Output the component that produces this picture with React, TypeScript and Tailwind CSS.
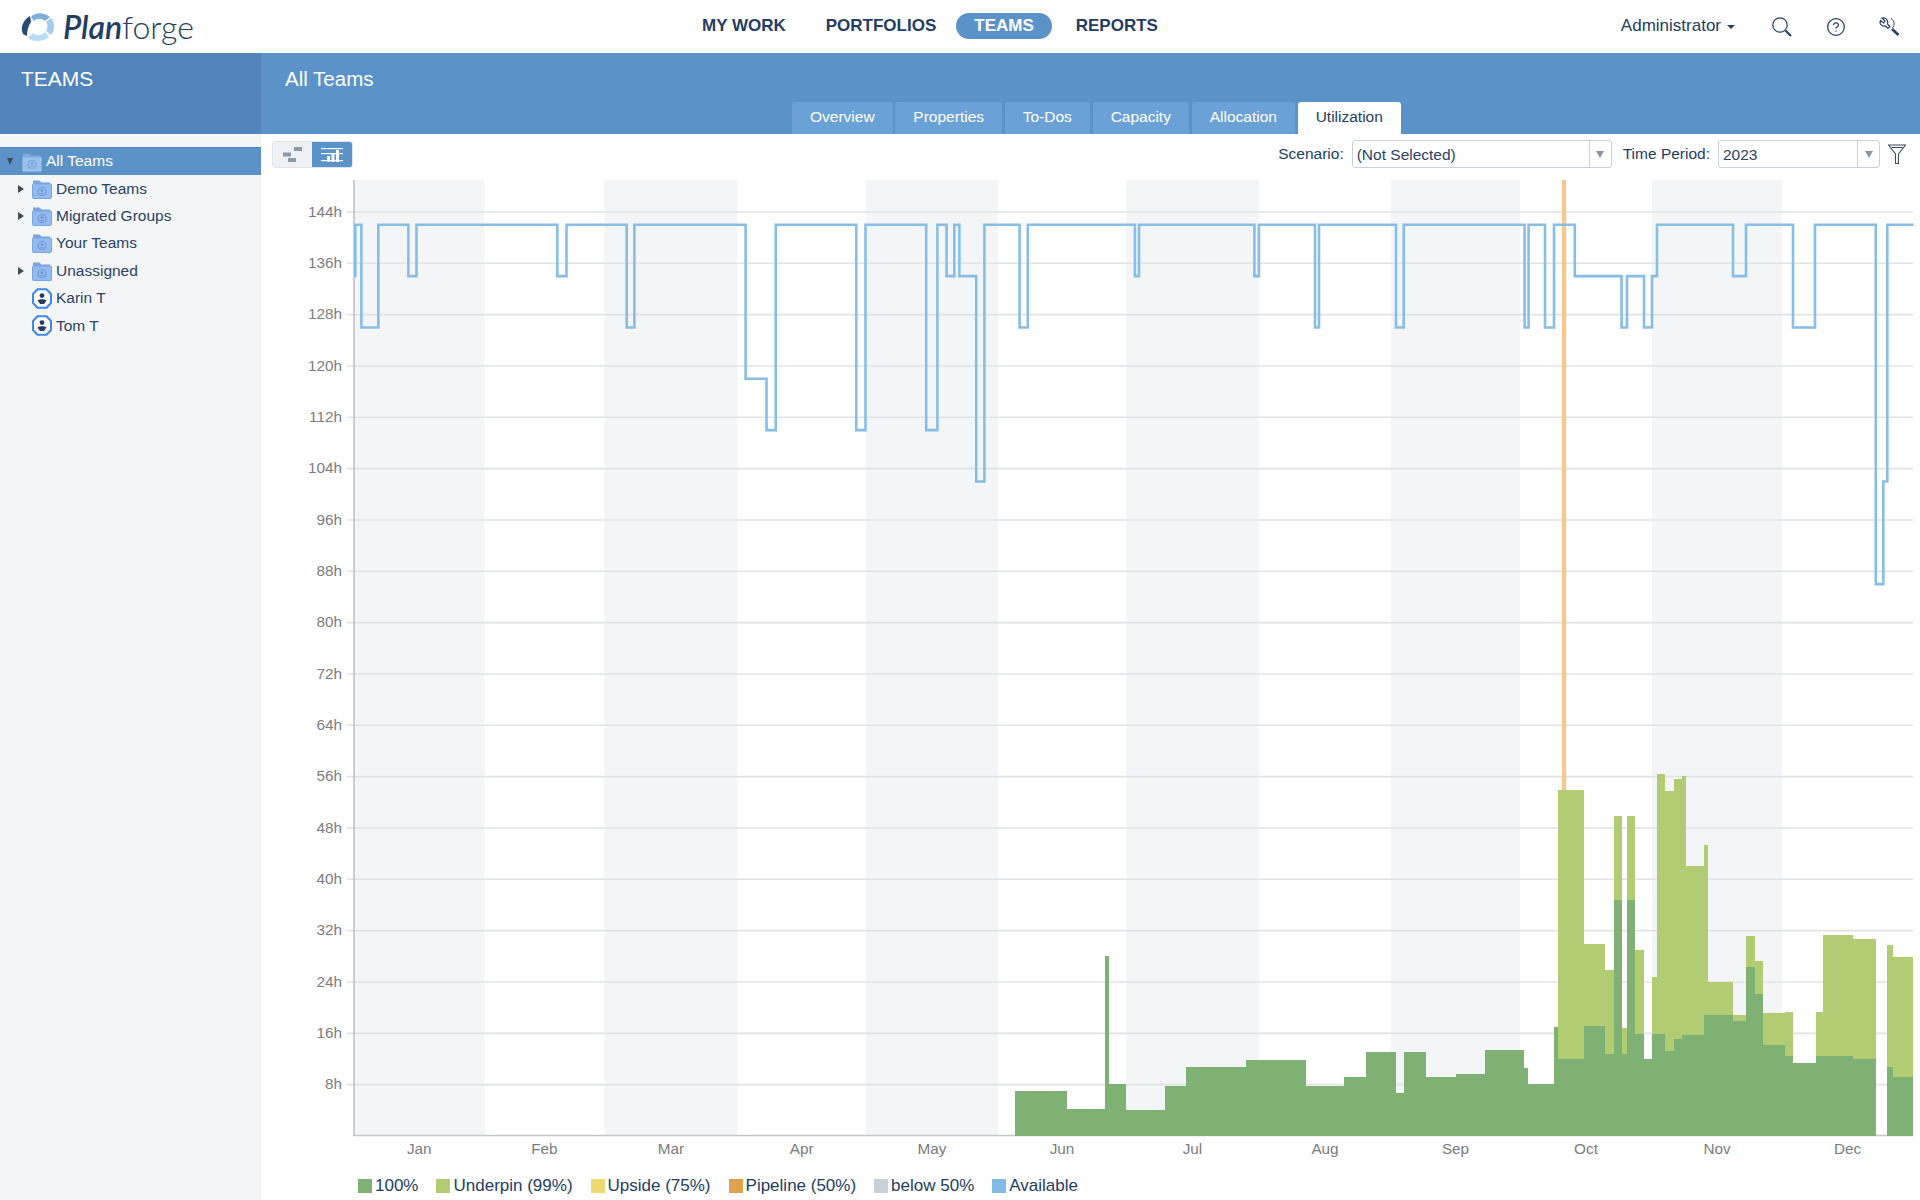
import { CircleHelp } from "lucide-react";

const navy = "#233d63";

// month boundaries on the x axis
const months = ["Jan", "Feb", "Mar", "Apr", "May", "Jun", "Jul", "Aug", "Sep", "Oct", "Nov", "Dec"];
const monthX = [354, 484.5, 604.3, 737.4, 866, 998, 1126, 1259, 1391, 1520, 1652, 1782, 1913];

const hours = Array.from({ length: 18 }, (_, i) => (i + 1) * 8);
const yOf = (h: number) => 1136 - h * 6.417;

// [x where the step starts, hours]
const available: [number, number][] = [
  [354, 134], [355.3, 142], [361.4, 126], [378.3, 142], [408.4, 134], [416.5, 142], [557.3, 134],
  [566.5, 142], [626.7, 126], [634.4, 142], [745.6, 118], [766.5, 110], [775.7, 142], [856.3, 110],
  [865.5, 142], [926.2, 110], [937.4, 142], [946.6, 134], [954.3, 142], [959.4, 134], [976.2, 102],
  [984.4, 142], [1019.6, 126], [1027.8, 142], [1134.9, 134], [1139, 142], [1254.4, 134], [1258.9, 142],
  [1315, 126], [1319, 142], [1396, 126], [1403.7, 142], [1524.6, 126], [1528.6, 142], [1545, 126],
  [1554, 142], [1574.8, 134], [1621.6, 126], [1627, 134], [1644, 126], [1652, 134], [1657, 142],
  [1733, 134], [1746, 142], [1793, 126], [1815, 142], [1875.8, 86], [1883.3, 102], [1887.3, 142],
];

function stepPath() {
  let d = "";
  available.forEach(([x, h], i) => {
    if (i === 0) d += `M${x} ${yOf(h)}`;
    else d += `H${x}V${yOf(h)}`;
  });
  return d + "H1913.5";
}

// [x0, x1, top of 100%, top of underpin] in page pixels
const bars: [number, number, number, number?][] = [
  [1015, 1067, 1091.3], [1067, 1105, 1108.7], [1105, 1109, 956], [1109, 1126, 1084], [1126, 1165, 1110],
  [1165, 1186, 1086], [1186, 1246, 1067], [1246, 1306, 1060], [1306, 1344, 1086], [1344, 1366, 1077],
  [1366, 1396, 1052.3], [1396, 1404, 1093], [1404, 1426, 1052.3], [1426, 1456, 1077], [1456, 1485, 1074.3],
  [1485, 1524, 1050], [1524, 1528, 1068], [1528, 1554, 1084.3], [1554, 1558, 1027.3],
  [1558, 1584, 1059, 790], [1584, 1605, 1026, 944], [1605, 1614, 1054, 970], [1614, 1622, 899.7, 816],
  [1622, 1627.3, 1054, 1028], [1627.3, 1635, 899.7, 816], [1635, 1644, 1034, 950.3], [1644, 1652, 1059],
  [1652, 1657.3, 1034, 976.7], [1657.3, 1665, 1034, 774], [1665, 1674.3, 1051, 791], [1674.3, 1682, 1039.3, 779.3],
  [1682, 1686, 1035.3, 775.7], [1686, 1704.3, 1035.3, 865.7], [1704.3, 1708.3, 1014.7, 845], [1708.3, 1733, 1014.7, 981.7],
  [1733, 1746, 1021, 1014.7], [1746, 1755.3, 967.3, 936], [1755.3, 1763, 993.7, 961], [1763, 1785.3, 1044.7, 1013],
  [1785.3, 1793, 1056, 1012], [1793, 1815.7, 1063], [1815.7, 1823.3, 1056, 1012], [1823.3, 1853.3, 1056, 935],
  [1853.3, 1875.7, 1059, 939], [1887.3, 1892.7, 1067, 945], [1892.7, 1913.3, 1077, 957],
];

const legend = [
  { label: "100%", color: "bg-[#7fb174]" },
  { label: "Underpin (99%)", color: "bg-[#b2cc74]" },
  { label: "Upside (75%)", color: "bg-[#ecd96f]" },
  { label: "Pipeline (50%)", color: "bg-[#dfa350]" },
  { label: "below 50%", color: "bg-[#c8d0d8]" },
  { label: "Available", color: "bg-[#81bbe3]" },
];

const tabs = ["Overview", "Properties", "To-Dos", "Capacity", "Allocation"];

function Logo() {
  return (
    <div className="flex items-center pl-[21px] w-[682px]">
      <svg width="34" height="30" viewBox="0 0 34 30" fill="none" className="mr-[8px]">
        <path d="M10 5 C14 0 23 0 29 5 L24 9 C20 6 16 6 13 9 Z" fill="#7fb0dc" />
        <path d="M30 6 C34 11 34 18 30 23 L25 19 C27 15 27 12 25 10 Z" fill="#a5cdee" />
        <path d="M28 25 C22 30 12 30 7 26 L12 21 C15 24 20 24 24 20 Z" fill="#b9dcf6" />
        <path d="M9 4 L10 10 C7 14 6 19 6 24 L2 22 C-1 16 2 8 9 4 Z" fill="#274a70" />
      </svg>
      <span className="font-['Lato',sans-serif] text-[32px] leading-none text-[#233d63]">
        <span className="italic font-semibold">Plan</span>
        <span className="font-light">forge</span>
      </span>
    </div>
  );
}

function SearchIcon() {
  return (
    <svg width="22" height="20" viewBox="0 0 22 20" fill="none" stroke={navy}>
      <circle cx="9" cy="8" r="7.2" strokeWidth="1.2" />
      <path d="M14.5 13.5 L20 19" strokeWidth="2.2" />
    </svg>
  );
}

function ToolsIcon() {
  return (
    <svg width="21" height="19" viewBox="0 0 21 19" fill="none" stroke={navy}>
      <path d="M3 1 L6 4 L4.5 6 L1.5 3.5 C0 7 3 10 6.5 9 L9 11.5 L11 9.5 L8.5 7 C9.5 3 6.5 0 3 1 Z" strokeWidth="1.2" />
      <path d="M12 1.5 C15.5 3.5 16 8 13.5 11" strokeWidth="1" />
      <path d="M13 12 L19.5 18" strokeWidth="2.6" />
    </svg>
  );
}

function FilterIcon() {
  return (
    <svg width="18" height="20" viewBox="0 0 18 20" fill="none" stroke="#3a4a5e" strokeWidth="1.1">
      <path d="M0.5 1 H17.5 L10.5 10 V19.5 H7.5 V10 Z" />
      <path d="M3.5 3.5 H14.5" />
    </svg>
  );
}

function FolderIcon({ selected }: { selected?: boolean }) {
  return (
    <svg width="20" height="20" viewBox="0 0 20 20">
      <path d="M1 1.5 H7.5 L9.5 3.5 H18 V7 H1 Z" fill={selected ? "#7ea8dc" : "#7ba5dc"} />
      <rect x="0.5" y="5" width="19" height="14.5" rx="1" fill={selected ? "#9cc0ee" : "#93bbef"} stroke={selected ? "#85addf" : "#7aa6de"} />
      <circle cx="10" cy="12.5" r="4" fill="none" stroke={selected ? "#7aa3d8" : "#6f9bd4"} strokeWidth="1.2" />
      <circle cx="10" cy="11.6" r="1.5" fill={selected ? "#7aa3d8" : "#6f9bd4"} />
      <path d="M7.5 15 C8.5 13.5 11.5 13.5 12.5 15" fill={selected ? "#7aa3d8" : "#6f9bd4"} />
    </svg>
  );
}

function PersonIcon() {
  return (
    <svg width="20" height="21" viewBox="0 0 20 21">
      <path d="M5.5 1.2 H14.5 L19 6 V15 L14.5 19.8 H5.5 L1 15 V6 Z" fill="#fff" stroke="#3f86ee" strokeWidth="2" strokeLinejoin="round" />
      <circle cx="10" cy="7.6" r="2.4" fill="#233d63" />
      <path d="M5.5 12.5 C7 10.8 13 10.8 14.5 12.5 L12 16 H8 Z" fill="#233d63" />
    </svg>
  );
}

function TreeRow({
  label,
  icon,
  arrow,
}: {
  label: string;
  icon: React.ReactNode;
  arrow?: boolean;
}) {
  return (
    <div className="flex items-center h-[27.4px] pl-[18px] text-[15.5px] text-[#2b4263]">
      <span className="w-[14px] flex">
        {arrow && <span className="border-y-[4px] border-y-transparent border-l-[6px] border-l-[#444b55]" />}
      </span>
      {icon}
      <span className="ml-[4px] -mt-px">{label}</span>
    </div>
  );
}

function Select({ value, widthClass }: { value: string; widthClass: string }) {
  return (
    <div className={`flex h-[28px] bg-white border border-[#c6d1dd] rounded-[3px] ${widthClass}`}>
      <span className="flex-1 pl-[4px] text-[15.5px] leading-[27px] text-[#2b4263]">{value}</span>
      <span className="w-[22px] border-l border-[#c6d1dd] flex items-center justify-center">
        <span className="border-x-[4.5px] border-x-transparent border-t-[7px] border-t-[#8a96a3]" />
      </span>
    </div>
  );
}

function Chart() {
  return (
    <svg width="1659" height="988" viewBox="261 172 1659 988" className="block" fontSize="15.3">
      {[0, 2, 4, 6, 8, 10].map((m) => (
        <rect key={m} x={monthX[m]} y="180" width={monthX[m + 1] - monthX[m]} height="956" fill="#f3f5f7" />
      ))}
      {hours.map((h) => (
        <line key={h} x1="347" x2="1913" y1={yOf(h)} y2={yOf(h)} stroke="#e1e3e6" strokeWidth="1.6" />
      ))}
      <line x1="354" x2="354" y1="180" y2="1136" stroke="#b8bdc3" strokeWidth="1.4" />
      <line x1="354" x2="1913" y1="1135.5" y2="1135.5" stroke="#c3c6ca" strokeWidth="1.4" />
      <rect x="1562" y="180" width="4.2" height="700" fill="#f6c68f" />
      {bars.map(([x0, x1, dark, light]) => (
        <g key={x0} shapeRendering="crispEdges">
          {light !== undefined && <rect x={x0} y={light} width={x1 - x0} height={1136 - light} fill="#b2cc74" />}
          <rect x={x0} y={dark} width={x1 - x0} height={1136 - dark} fill="#7fb174" />
        </g>
      ))}
      <path d={stepPath()} fill="none" stroke="#86bee6" strokeWidth="2.6" />
      {hours.map((h) => (
        <text key={h} x="342" y={yOf(h) - 0.7} textAnchor="end" dominantBaseline="central" fill="#7a7c80">
          {h}h
        </text>
      ))}
      {months.map((m, i) => (
        <text key={m} x={(monthX[i] + monthX[i + 1]) / 2} y="1148" textAnchor="middle" dominantBaseline="central" fill="#7a7c80">
          {m}
        </text>
      ))}
    </svg>
  );
}

export default function App() {
  return (
    <div className="w-[1920px] h-[1200px] overflow-hidden bg-white flex flex-col font-['Liberation_Sans',Arial,sans-serif]">
      {/* top bar */}
      <div className="h-[53px] flex items-center shrink-0">
        <Logo />
        <nav className="flex items-center -mt-px text-[17px] font-bold text-[#233d63]">
          <span className="px-5">MY WORK</span>
          <span className="px-5">PORTFOLIOS</span>
          <span className="px-[18px] h-[26px] leading-[26px] rounded-full bg-[#5b93c9] text-white">TEAMS</span>
          <span className="px-5 ml-1">REPORTS</span>
        </nav>
        <div className="ml-auto flex items-center pr-[20px] text-[#233d63]">
          <span className="text-[17px] -mt-px">Administrator</span>
          <span className="ml-[6px] mr-[36px] border-x-[4px] border-x-transparent border-t-[4px] border-t-[#233d63]" />
          <SearchIcon />
          <CircleHelp className="ml-[33px] mr-[33px]" size={20} strokeWidth={1.5} color={navy} />
          <ToolsIcon />
        </div>
      </div>

      {/* blue header */}
      <div className="h-[81px] flex shrink-0 text-white">
        <div className="w-[261px] bg-[#5084ba] pl-[21px] pt-[13px] text-[21px] leading-[26px]">TEAMS</div>
        <div className="flex-1 bg-[#5b93c9] pt-[13px]">
          <div className="pl-[24px] text-[20.5px] leading-[26px]">All Teams</div>
          <div className="mt-[10px] ml-[531px] flex gap-[2.75px] text-[15.5px]">
            {tabs.map((t) => (
              <span key={t} className="h-[32px] leading-[30px] px-[18px] rounded-t-[3px] bg-[#6aa2d7]">
                {t}
              </span>
            ))}
            <span className="h-[32px] leading-[30px] px-[18px] rounded-t-[3px] bg-white text-[#233d63]">Utilization</span>
          </div>
        </div>
      </div>

      <div className="flex-1 flex min-h-0">
        {/* team tree */}
        <aside className="w-[261px] shrink-0 bg-[#f3f5f7] pt-[13px]">
          <div className="flex items-center h-[28px] pl-[7px] bg-[#5b93c9] text-white text-[15.5px] border-t border-[#5084ba]">
            <span className="w-[15px] flex">
              <span className="border-x-[3.5px] border-x-transparent border-t-[7px] border-t-[#3d4754]" />
            </span>
            <FolderIcon selected />
            <span className="ml-[4px] -mt-[2px]">All Teams</span>
          </div>
          <TreeRow label="Demo Teams" icon={<FolderIcon />} arrow />
          <TreeRow label="Migrated Groups" icon={<FolderIcon />} arrow />
          <TreeRow label="Your Teams" icon={<FolderIcon />} />
          <TreeRow label="Unassigned" icon={<FolderIcon />} arrow />
          <TreeRow label="Karin T" icon={<PersonIcon />} />
          <TreeRow label="Tom T" icon={<PersonIcon />} />
        </aside>

        <main className="flex-1 flex flex-col">
          {/* toolbar */}
          <div className="h-[38px] shrink-0 flex pt-[6px] pl-[11px] pr-[14px] text-[15.5px] text-[#233d63]">
            <div className="flex h-[27px] mt-px rounded-[3px] overflow-hidden border border-[#dfe4ea]">
              <span className="w-[39px] bg-[#eef1f4] flex items-center justify-center">
                <svg width="19" height="15" viewBox="0 0 19 15" fill="#8d99a8">
                  <rect x="11" width="8" height="4" />
                  <rect y="5.5" width="8" height="4" />
                  <rect x="5" y="11" width="8" height="4" />
                </svg>
              </span>
              <span className="w-[40px] bg-[#5b93c9] flex items-center justify-center">
                <svg width="22" height="14" viewBox="0 0 22 14" fill="#fff">
                  <rect width="22" height="1.2" />
                  <rect y="5" width="22" height="1.2" />
                  <rect y="12" width="22" height="1.2" />
                  <rect x="6" y="8" width="3" height="6" />
                  <rect x="10.5" y="5" width="3" height="9" />
                  <rect x="15" y="2" width="3" height="12" />
                </svg>
              </span>
            </div>
            <div className="ml-auto flex items-center h-[28px]">
              <span className="mr-[8px]">Scenario:</span>
              <Select value="(Not Selected)" widthClass="w-[260px]" />
              <span className="ml-[11px] mr-[8px]">Time Period:</span>
              <Select value="2023" widthClass="w-[162px]" />
              <span className="ml-[8px] flex">
                <FilterIcon />
              </span>
            </div>
          </div>

          <Chart />

          {/* legend */}
          <div className="h-[40px] flex items-center gap-[18px] pl-[97px] pt-[12px] text-[17px] text-[#233d63]">
            {legend.map((l) => (
              <span key={l.label} className="flex items-center gap-[3px]">
                <span className={`w-[14px] h-[14px] ${l.color}`} />
                {l.label}
              </span>
            ))}
          </div>
        </main>
      </div>
    </div>
  );
}
